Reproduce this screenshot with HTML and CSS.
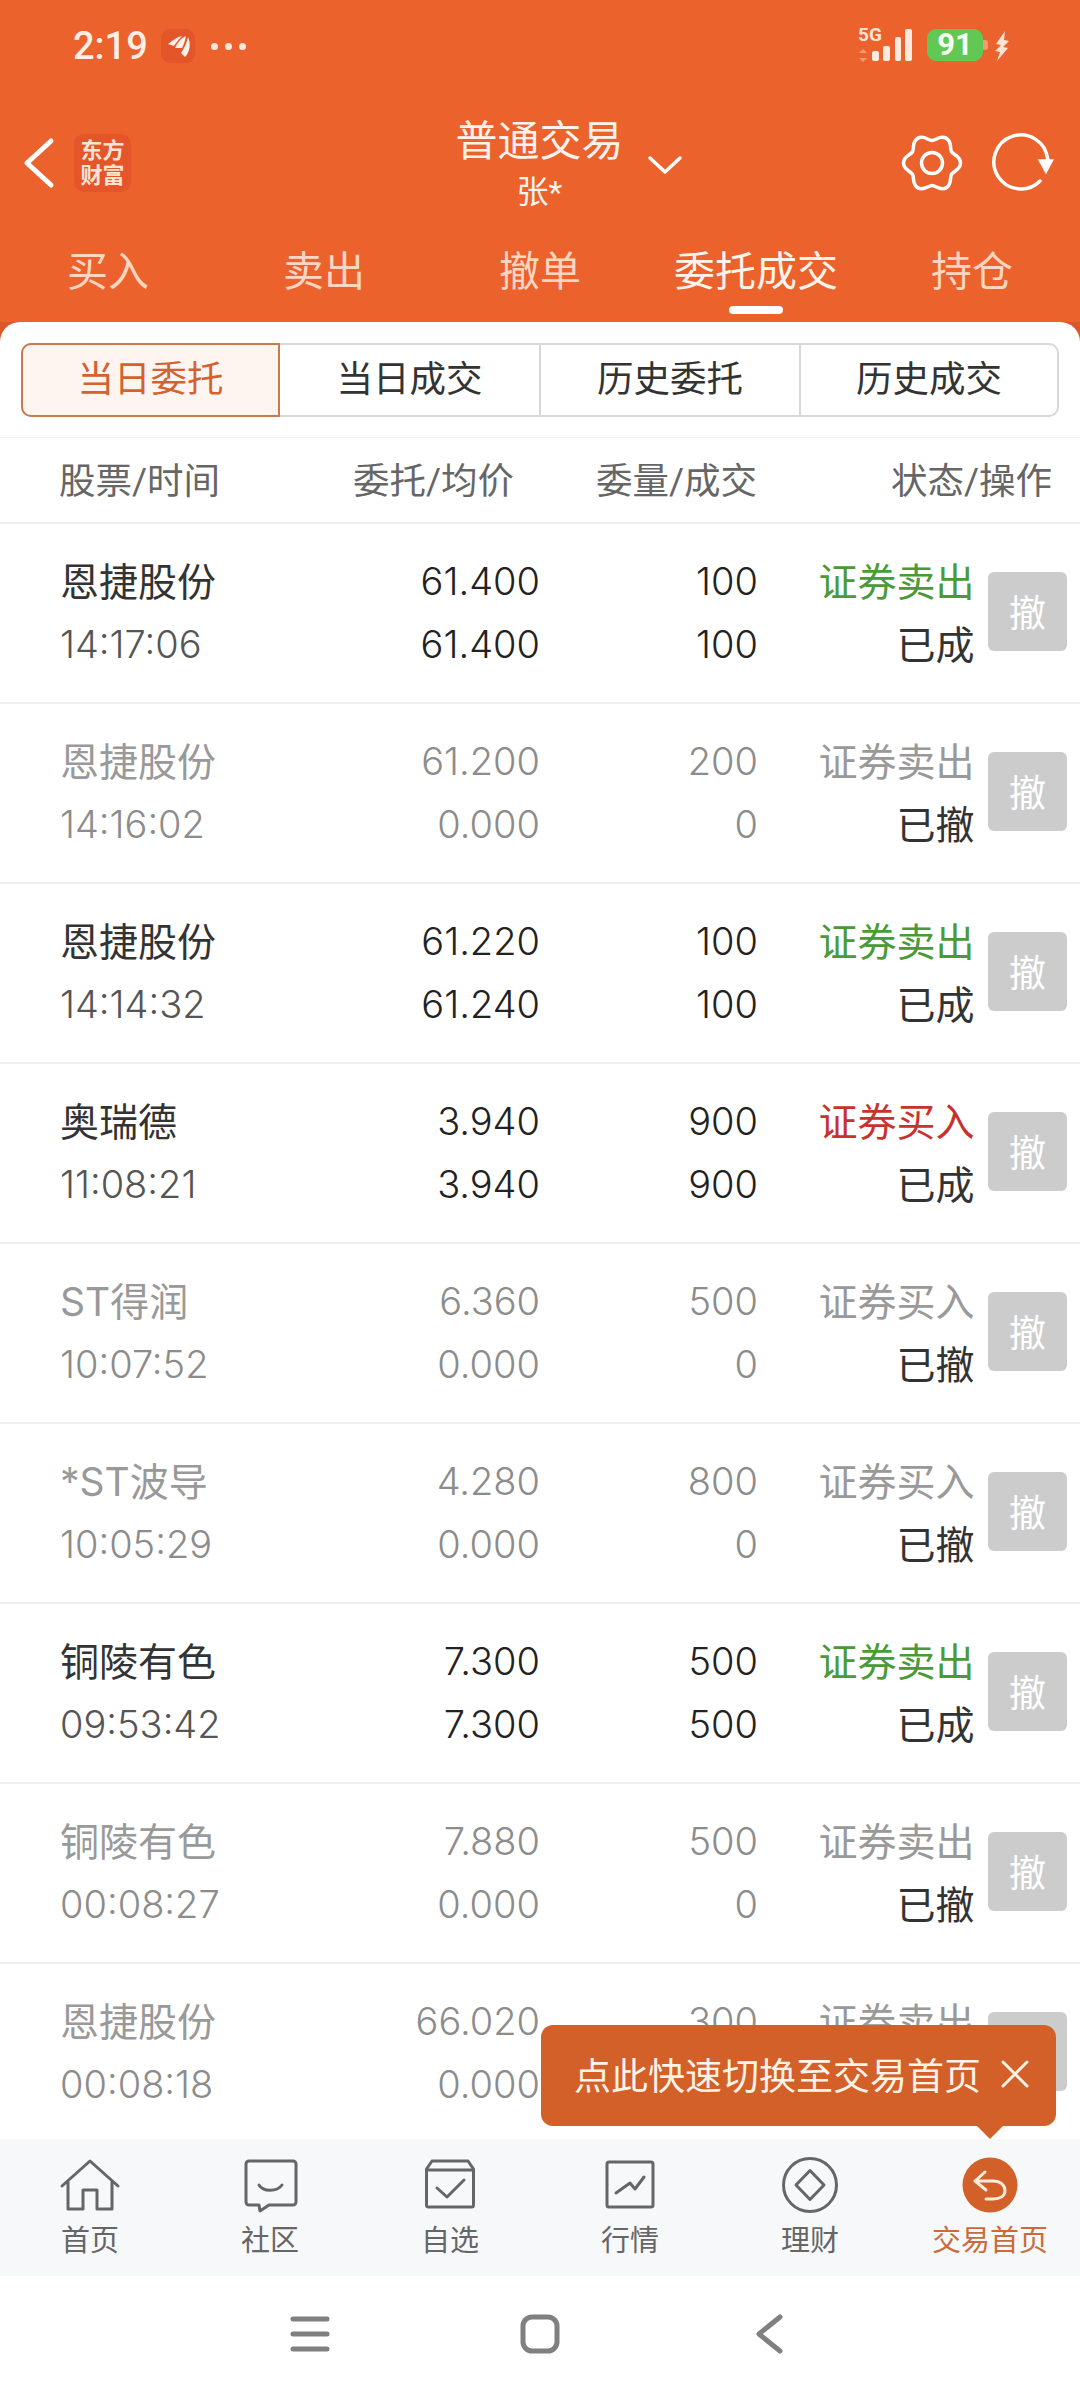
FILE: index.html
```html
<!DOCTYPE html>
<html lang="zh-CN">
<head>
<meta charset="utf-8">
<title>普通交易</title>
<link rel="stylesheet" href="styles.css">
</head>
<body>
<div class="app">
  <header class="top">
    <div class="status">
      <div class="status-left">
        <span class="clock">2:19</span>
        <span class="app-badge">
          <svg width="34" height="34" viewBox="0 0 34 34"><path class="feather" d="M7 15C12 11 16 8 21 7C18 10 15 14 13 17Z"/><path class="feather" d="M14 19C16 14 20 9 25 7C24 12 23 15 21 19Z"/><path class="feather" d="M20 24C23 20 26 13 27 8C30 14 29 23 24 28Z"/></svg>
        </span>
        <span class="dots"><i></i><i></i><i></i></span>
      </div>
      <div class="status-right">
        <svg class="signal" width="56" height="36" viewBox="0 0 56 36">
          <text class="fiveg" x="0" y="14">5G</text>
          <path class="updown" d="M5 22l4 4H1zM5 35l4-4H1z"/>
          <rect class="bar" x="14" y="24" width="7" height="10" rx="2"/>
          <rect class="bar" x="25" y="19" width="7" height="15" rx="2"/>
          <rect class="bar" x="37" y="10" width="6" height="24" rx="2"/>
          <rect class="bar" x="47" y="2" width="7" height="32" rx="2"/>
        </svg>
        <span class="battery">91</span>
        <svg class="bolt" width="16" height="30" viewBox="0 0 16 30"><path d="M11 0L2 13l5 1-6 6 5 1-3 9L14 17l-5-1 6-6-5-1z"/></svg>
      </div>
    </div>
    <div class="titlebar">
      <div class="tb-left">
        <svg width="30" height="50" viewBox="0 0 30 50"><path class="stroke-white thick" d="M27 3L3 25l24 22"/></svg>
        <span class="logo"><span>东方</span><span>财富</span></span>
      </div>
      <div class="tb-title">
        <span class="title-main">普通交易</span>
        <span class="title-sub">张*</span>
      </div>
      <div class="tb-right">
        <svg class="chev" width="34" height="18" viewBox="0 0 34 18"><path class="stroke-white" d="M2 2l15 14L32 2"/></svg>
        <div class="tb-actions">
          <svg width="60" height="60" viewBox="-30 -30 60 60">
            <defs><path id="gear-tooth" class="stroke-white" d="M28.500 0C28.500 7 21.490 7.790 19.490 11.250C17.490 14.710 20.310 21.180 14.250 24.680"/></defs>
            <use href="#gear-tooth"/>
            <use href="#gear-tooth" transform="rotate(60)"/>
            <use href="#gear-tooth" transform="rotate(120)"/>
            <use href="#gear-tooth" transform="rotate(180)"/>
            <use href="#gear-tooth" transform="rotate(240)"/>
            <use href="#gear-tooth" transform="rotate(300)"/>
            <circle class="stroke-white" cx="0" cy="0" r="10.500"/>
          </svg>
          <svg width="64" height="60" viewBox="0 0 64 60"><path class="stroke-white" d="M49 48A27 27 0 1 1 56.700 26"/><path class="fill-white" d="M46.700 26.300h16.300l-8 15z"/></svg>
        </div>
      </div>
    </div>
    <nav class="tabs">
      <span class="tab">买入</span>
      <span class="tab">卖出</span>
      <span class="tab">撤单</span>
      <span class="tab active">委托成交</span>
      <span class="tab">持仓</span>
    </nav>
  </header>

  <main class="panel">
    <div class="seg-wrap">
      <div class="seg">
        <span class="seg-item active">当日委托</span>
        <span class="seg-item">当日成交</span>
        <span class="seg-item">历史委托</span>
        <span class="seg-item">历史成交</span>
      </div>
    </div>
    <div class="thead">
      <span>股票/时间</span>
      <span class="r">委托/均价</span>
      <span class="r">委量/成交</span>
      <span class="r">状态/操作</span>
    </div>
    <div class="list">
      <div class="row">
        <div class="c"><span class="cjk">恩捷股份</span><span class="time">14:17:06</span></div>
        <div class="c r"><span>61.400</span><span>61.400</span></div>
        <div class="c r"><span>100</span><span>100</span></div>
        <div class="c r"><span class="cjk sell">证券卖出</span><span class="cjk">已成</span></div>
        <span class="cancel">撤</span>
      </div>
      <div class="row muted">
        <div class="c"><span class="cjk">恩捷股份</span><span class="time">14:16:02</span></div>
        <div class="c r"><span>61.200</span><span>0.000</span></div>
        <div class="c r"><span>200</span><span>0</span></div>
        <div class="c r"><span class="cjk">证券卖出</span><span class="cjk state">已撤</span></div>
        <span class="cancel">撤</span>
      </div>
      <div class="row">
        <div class="c"><span class="cjk">恩捷股份</span><span class="time">14:14:32</span></div>
        <div class="c r"><span>61.220</span><span>61.240</span></div>
        <div class="c r"><span>100</span><span>100</span></div>
        <div class="c r"><span class="cjk sell">证券卖出</span><span class="cjk">已成</span></div>
        <span class="cancel">撤</span>
      </div>
      <div class="row">
        <div class="c"><span class="cjk">奥瑞德</span><span class="time">11:08:21</span></div>
        <div class="c r"><span>3.940</span><span>3.940</span></div>
        <div class="c r"><span>900</span><span>900</span></div>
        <div class="c r"><span class="cjk buy">证券买入</span><span class="cjk">已成</span></div>
        <span class="cancel">撤</span>
      </div>
      <div class="row muted">
        <div class="c"><span class="cjk">ST得润</span><span class="time">10:07:52</span></div>
        <div class="c r"><span>6.360</span><span>0.000</span></div>
        <div class="c r"><span>500</span><span>0</span></div>
        <div class="c r"><span class="cjk">证券买入</span><span class="cjk state">已撤</span></div>
        <span class="cancel">撤</span>
      </div>
      <div class="row muted">
        <div class="c"><span class="cjk">*ST波导</span><span class="time">10:05:29</span></div>
        <div class="c r"><span>4.280</span><span>0.000</span></div>
        <div class="c r"><span>800</span><span>0</span></div>
        <div class="c r"><span class="cjk">证券买入</span><span class="cjk state">已撤</span></div>
        <span class="cancel">撤</span>
      </div>
      <div class="row">
        <div class="c"><span class="cjk">铜陵有色</span><span class="time">09:53:42</span></div>
        <div class="c r"><span>7.300</span><span>7.300</span></div>
        <div class="c r"><span>500</span><span>500</span></div>
        <div class="c r"><span class="cjk sell">证券卖出</span><span class="cjk">已成</span></div>
        <span class="cancel">撤</span>
      </div>
      <div class="row muted">
        <div class="c"><span class="cjk">铜陵有色</span><span class="time">00:08:27</span></div>
        <div class="c r"><span>7.880</span><span>0.000</span></div>
        <div class="c r"><span>500</span><span>0</span></div>
        <div class="c r"><span class="cjk">证券卖出</span><span class="cjk state">已撤</span></div>
        <span class="cancel">撤</span>
      </div>
      <div class="row muted">
        <div class="c"><span class="cjk">恩捷股份</span><span class="time">00:08:18</span></div>
        <div class="c r"><span>66.020</span><span>0.000</span></div>
        <div class="c r"><span>300</span><span>0</span></div>
        <div class="c r"><span class="cjk">证券卖出</span><span class="cjk state">已撤</span></div>
        <span class="cancel">撤</span>
      </div>
    </div>
  </main>

  <footer class="tabbar">
    <div class="tip">
      <span>点此快速切换至交易首页</span>
      <svg width="28" height="28" viewBox="0 0 28 28"><path class="stroke-tip" d="M2 2l24 24M26 2L2 26"/></svg>
    </div>
    <div class="nav-item">
      <svg width="60" height="56" viewBox="0 0 60 56"><path class="stroke-gray" d="M2 29L30 4l28 25M8 25v27h15V33h14v19h15V25"/></svg>
      <span>首页</span>
    </div>
    <div class="nav-item">
      <svg width="60" height="56" viewBox="0 0 60 56"><path class="stroke-gray" d="M9 4h44a3 3 0 0 1 3 3v38a3 3 0 0 1-3 3H29l-9 6-1-6H9a3 3 0 0 1-3-3V7a3 3 0 0 1 3-3z"/><path class="stroke-gray" d="M19 28c4 7 18 7 23 0"/></svg>
      <span>社区</span>
    </div>
    <div class="nav-item">
      <svg width="60" height="56" viewBox="0 0 60 56"><path class="stroke-gray" d="M12 4h36l5.500 8v36a2 2 0 0 1-2 2H8.500a2 2 0 0 1-2-2V12z"/><path class="stroke-gray" d="M6.500 13h47M17 31l10 9 17-17"/></svg>
      <span>自选</span>
    </div>
    <div class="nav-item">
      <svg width="60" height="56" viewBox="0 0 60 56"><rect class="stroke-gray" x="7" y="5" width="46" height="45" rx="2"/><path class="stroke-gray" d="M16 36l14-10 5 6 9-12"/></svg>
      <span>行情</span>
    </div>
    <div class="nav-item">
      <svg width="60" height="56" viewBox="0 0 60 56"><circle class="stroke-gray" cx="30" cy="28" r="26.500"/><path class="stroke-gray" d="M30 13.500l14 14.500-14 14.500L16 28z"/></svg>
      <span>理财</span>
    </div>
    <div class="nav-item on">
      <svg width="60" height="56" viewBox="0 0 60 56"><circle class="fill-tip" cx="30" cy="28" r="27.500"/><path class="stroke-cream" d="M25 15L15 24l11 9M15 24h18c7 0 12 4 12 9.500s-5 8.500-12 8.500h-7"/></svg>
      <span>交易首页</span>
    </div>
  </footer>

  <div class="sysnav">
    <svg width="40" height="40" viewBox="0 0 40 40"><path class="stroke-sys" d="M3 5h34M3 20h34M3 35h34"/></svg>
    <svg width="40" height="40" viewBox="0 0 40 40"><rect class="stroke-sys" x="3" y="3" width="34" height="34" rx="9"/></svg>
    <svg width="40" height="40" viewBox="0 0 40 40"><path class="stroke-sys" d="M30 3L9 20l21 17"/></svg>
  </div>
</div>
</body>
</html>
```
FILE: styles.css
```css
* { box-sizing: border-box; }
html, body { margin: 0; padding: 0; background: #fff; }
body { font-family: Roboto, "Noto Sans CJK SC", sans-serif; color: #333; }
.app { width: 1080px; height: 2400px; display: flex; flex-direction: column; overflow: hidden; background: #d9582a; }
svg { display: block; fill: none; overflow: visible; }

.top { background: #eb622c; height: 322px; color: #fff; flex: none; }

.status { height: 92px; display: flex; justify-content: space-between; align-items: center; padding: 0 70px 0 73px; }
.status-left { display: flex; align-items: center; }
.clock { font-size: 38px; font-weight: 500; color: #feeee5; width: 88px; }
.app-badge { width: 34px; height: 34px; border-radius: 9px; background: #e5552a; display: block; }
.feather { fill: #fdf0e8; }
.dots { display: flex; gap: 7px; margin-left: 16px; }
.dots i { width: 7px; height: 7px; border-radius: 50%; background: #fde6da; display: block; }
.status-right { display: flex; align-items: center; }
.fiveg { font-family: Roboto, sans-serif; font-size: 19px; font-weight: 700; fill: #fde3d6; }
.updown { fill: #f49a78; }
.bar { fill: #feeadf; }
.signal { margin-top: -2px; }
.battery { margin: -3px 0 0 13px; width: 56px; height: 32px; border-radius: 9px; background: #62c854; color: #f5fff0; font-size: 31px; font-weight: 700; line-height: 32px; text-align: center; position: relative; }
.battery::after { content: ""; position: absolute; right: -5px; top: 11px; width: 5px; height: 10px; border-radius: 0 3px 3px 0; background: #f59a70; }
.bolt { margin-left: 11px; margin-top: -1px; }
.bolt path { fill: #fde3d6; }

.titlebar { height: 142px; display: grid; grid-template-columns: 1fr 176px 1fr; align-items: center; padding: 0 25px 0 24px; }
.tb-left { display: flex; align-items: center; gap: 20px; }
.logo { width: 57px; height: 58px; border-radius: 10px; background: #e5552a; display: flex; flex-direction: column; align-items: center; justify-content: center; font-size: 22px; font-weight: 700; line-height: 25px; color: #fde4d3; }
.logo span { display: block; }
.tb-title { display: flex; flex-direction: column; align-items: center; }
.title-main { font-size: 42px; line-height: 52px; color: #fef3ec; }
.title-sub { font-size: 32px; line-height: 38px; color: #fef3ec; margin-top: 5px; }
.tb-right { display: flex; align-items: center; justify-content: space-between; }
.chev { margin-left: 20px; margin-top: 4px; }
.tb-actions { display: flex; align-items: center; gap: 29px; }
.stroke-white { stroke: #fff; stroke-width: 3.500; stroke-linecap: round; stroke-linejoin: round; fill: none; }
.thick { stroke-width: 5; }
.fill-white { fill: #fff; }

.tabs { display: grid; grid-template-columns: repeat(5, 1fr); height: 88px; }
.tab { position: relative; font-size: 41px; line-height: 76px; text-align: center; color: #fdd5c1; }
.tab.active { color: #fff3ec; }
.tab.active::after { content: ""; position: absolute; left: 50%; margin-left: -27px; top: 72px; width: 54px; height: 8px; border-radius: 4px; background: #fff; }

.panel { flex: 1; min-height: 0; display: flex; flex-direction: column; background: #fff; border-radius: 20px 20px 0 0; overflow: hidden; }
.seg-wrap { height: 116px; padding: 21px 21px 20px; border-bottom: 1px solid #f2f2f2; flex: none; }
.seg { display: grid; grid-template-columns: 257px 259px 260px 1fr; height: 74px; border: 2px solid #d8d8d8; border-radius: 10px; }
.seg-item { font-size: 36.500px; line-height: 70px; text-align: center; color: #333; border-left: 2px solid #d8d8d8; }
.seg-item:first-child { border-left: 0; }
.seg-item.active { margin: -2px 0 -2px -2px; color: #d2622f; background: #fef5f0; border: 2px solid #c97a4e; border-radius: 10px 0 0 10px; }
.seg-item.active + .seg-item { border-left: 0; }

.thead, .row { display: grid; align-items: center; }
.thead { height: 86px; padding: 0 28px 4px 59px; font-size: 36.500px; color: #666; border-bottom: 2px solid #efefef; flex: none; grid-template-columns: 201px 254px 243px 295px; }
.r { text-align: right; }
.list { flex: 1; min-height: 0; overflow: hidden; }
.row { height: 180px; padding: 0 13px 0 60px; grid-template-columns: 200px 280px 218px 216.500px 13.500px 79px; border-bottom: 2px solid #efefef; font-family: Inter, "Noto Sans CJK SC", sans-serif; font-size: 38px; font-weight: 300; line-height: 63px; color: #222; }
.c { display: flex; flex-direction: column; }
.c span { display: block; }
.cjk { font-size: 39px; font-weight: 400; color: #333; }
.time { color: #555; }
.row .sell { color: #4a9a35; }
.row .buy { color: #c8322e; }
.cancel { grid-column: 6; width: 79px; height: 79px; margin-top: -3px; border-radius: 6px; background: #cccccc; color: #fff; font-size: 37px; line-height: 79px; text-align: center; font-weight: 400; font-family: "Noto Sans CJK SC", sans-serif; }
.muted, .muted .time { color: #8c8c8c; }
.muted .cjk { color: #999; }
.muted .cjk.state { color: #333; }

.tabbar { position: relative; flex: none; height: 137px; background: #f7f8fa; display: grid; grid-template-columns: repeat(6, 1fr); padding-top: 18px; }
.nav-item { display: flex; flex-direction: column; align-items: center; font-size: 29px; line-height: 36px; color: #666; }
.nav-item span { margin-top: 10px; }
.nav-item.on { color: #cd6a3a; }
.stroke-gray { stroke: #666; stroke-width: 3; stroke-linejoin: round; stroke-linecap: round; fill: none; }
.fill-tip { fill: #d36028; }
.stroke-cream { stroke: #fdebdd; stroke-width: 3; stroke-linejoin: round; stroke-linecap: round; fill: none; }

.tip { position: absolute; right: 24px; bottom: 150px; width: 515px; height: 101px; padding: 0 0 3px 33px; border-radius: 12px; background: #d36028; color: #fff3e8; font-size: 37px; display: flex; align-items: center; gap: 20px; white-space: nowrap; }
.tip::after { content: ""; position: absolute; top: 100%; right: 53px; border: 13px solid transparent; border-top-color: #d36028; border-bottom: 0; }
.stroke-tip { stroke: #fff3e8; stroke-width: 3; stroke-linecap: round; fill: none; }

.sysnav { flex: none; height: 124px; background: #fff; display: flex; align-items: center; justify-content: flex-start; padding: 0 0 8px 290px; gap: 190px; }
.stroke-sys { stroke: #808080; stroke-width: 5; stroke-linecap: round; stroke-linejoin: round; fill: none; }
```
